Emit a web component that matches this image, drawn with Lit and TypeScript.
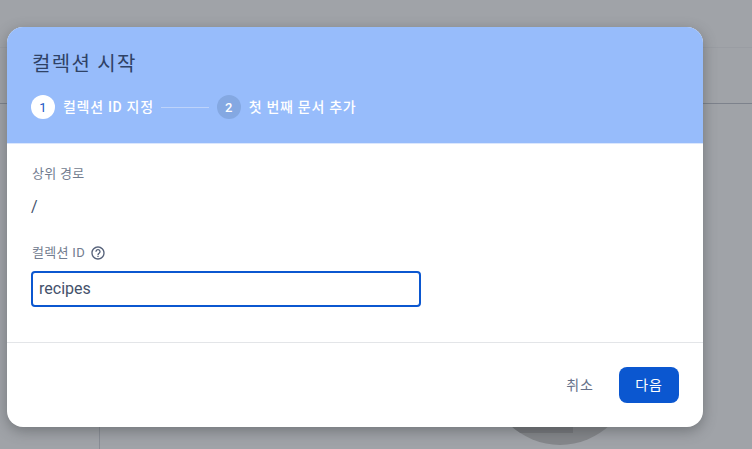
import { LitElement, html, css } from "lit";
import { customElement } from "lit/decorators.js";

@customElement("app-root")
export class AppRoot extends LitElement {
  static styles = css`
    :host {
      display: block;
      position: relative;
      width: 752px;
      height: 449px;
      overflow: hidden;
      background: #a0a3a8;
      font-family: Roboto, "Noto Sans CJK KR", sans-serif;
      box-sizing: border-box;
      padding: 27px 49px 22px 7px;
    }
    .top-line { position: absolute; left: 0; right: 0; top: 47px; height: 1px; background: #9a9da3; }
    .mid-line { position: absolute; left: 0; right: 0; top: 103px; height: 1px; background: #7d828c; }
    .v-line { position: absolute; left: 99px; top: 103px; bottom: 0; width: 1px; background: #898d95; }
    .circle { position: absolute; left: 488px; top: 301px; width: 144px; height: 144px; border-radius: 50%; background: #85878b; overflow: hidden; }
    .square { position: absolute; left: 0; top: 99px; width: 85px; height: 33px; background: #75777b; }
    .dialog {
      position: relative;
      height: 400px;
      border-radius: 16px;
      background: #fff;
      overflow: hidden;
      display: flex;
      flex-direction: column;
      box-shadow: 0 4px 14px rgba(60, 64, 67, 0.45);
    }
    .header {
      height: 117px;
      box-sizing: border-box;
      background: #97bcfb;
      padding: 23px 24px 0 25px;
      border-bottom: 1px solid #dbe7fd;
      flex: none;
    }
    h1 {
      margin: 0;
      font-size: 20px;
      letter-spacing: 1.3px;
      line-height: 28px;
      font-weight: 400;
      color: #2f4266;
    }
    .steps { display: flex; align-items: center; margin: 17px 0 0 -1px; height: 24px; }
    .badge {
      width: 24px;
      height: 24px;
      border-radius: 50%;
      display: flex;
      align-items: center;
      justify-content: center;
      font-size: 13px;
      font-weight: 500;
      flex: none;
    }
    .badge.on { background: #fff; color: #1a56c4; font-weight: 400; }
    .badge.off { background: #84a8e2; color: #fff; }
    .step { font-size: 14px; letter-spacing: 0.7px; font-weight: 500; color: #fff; margin-left: 8px; white-space: nowrap; position: relative; top: -1px; }
    .rule { width: 48px; height: 1px; background: #bdd3fa; margin: 0 8px; flex: none; }
    .first { margin-right: -1px; }
    .body { flex: 1; padding: 20px 24px 0 24px; }
    .label { font-size: 13px; letter-spacing: 0.3px; line-height: 20px; color: #727c8f; display: flex; align-items: center; padding-left: 1px; }
    .path { font-size: 16px; line-height: 20px; color: #44516b; margin-top: 13px; }
    .label.id { margin-top: 26px; }
    .label svg { margin-left: 5px; flex: none; }
    .input {
      margin-top: 8px;
      width: 390px;
      height: 36px;
      box-sizing: border-box;
      border: 2px solid #0b57d0;
      border-radius: 4px;
      font: 400 16px Roboto, sans-serif;
      letter-spacing: 0;
      color: #44516b;
      padding: 0 6px 2px;
      display: flex;
      align-items: center;
    }
    .footer {
      height: 85px;
      box-sizing: border-box;
      border-top: 1px solid #e3e5e8;
      display: flex;
      justify-content: flex-end;
      align-items: flex-start;
      padding: 24px 24px 0 0;
      flex: none;
      gap: 8px;
    }
    .btn { height: 36px; border-radius: 8px; display: flex; align-items: center; justify-content: center; font-size: 14px; letter-spacing: 0.8px; padding-bottom: 2px; box-sizing: border-box; }
    .cancel { width: 60px; color: #667189; position: relative; left: -1px; }
    .next { width: 60px; background: #0b57d0; color: #fff; }
  `;

  render() {
    return html`
      <div class="top-line"></div>
      <div class="mid-line"></div>
      <div class="v-line"></div>
      <div class="circle"><div class="square"></div></div>
      <div class="dialog">
        <div class="header">
          <h1>컬렉션 시작</h1>
          <div class="steps">
            <div class="badge on">1</div>
            <div class="step first">컬렉션 ID 지정</div>
            <div class="rule"></div>
            <div class="badge off">2</div>
            <div class="step">첫 번째 문서 추가</div>
          </div>
        </div>
        <div class="body">
          <div class="label">상위 경로</div>
          <div class="path">/</div>
          <div class="label id">
            컬렉션 ID
            <svg width="16" height="16" viewBox="0 0 24 24" fill="#56627a">
              <path d="M11 18h2v-2h-2v2zm1-16C6.48 2 2 6.48 2 12s4.480 10 10 10 10-4.480 10-10S17.520 2 12 2zm0 18c-4.410 0-8-3.590-8-8s3.590-8 8-8 8 3.590 8 8-3.590 8-8 8zm0-14c-2.210 0-4 1.790-4 4h2c0-1.100.9-2 2-2s2 .9 2 2c0 2-3 1.750-3 5h2c0-2.250 3-2.500 3-5 0-2.210-1.790-4-4-4z"/>
            </svg>
          </div>
          <div class="input">recipes</div>
        </div>
        <div class="footer">
          <div class="btn cancel">취소</div>
          <div class="btn next">다음</div>
        </div>
      </div>
    `;
  }
}
